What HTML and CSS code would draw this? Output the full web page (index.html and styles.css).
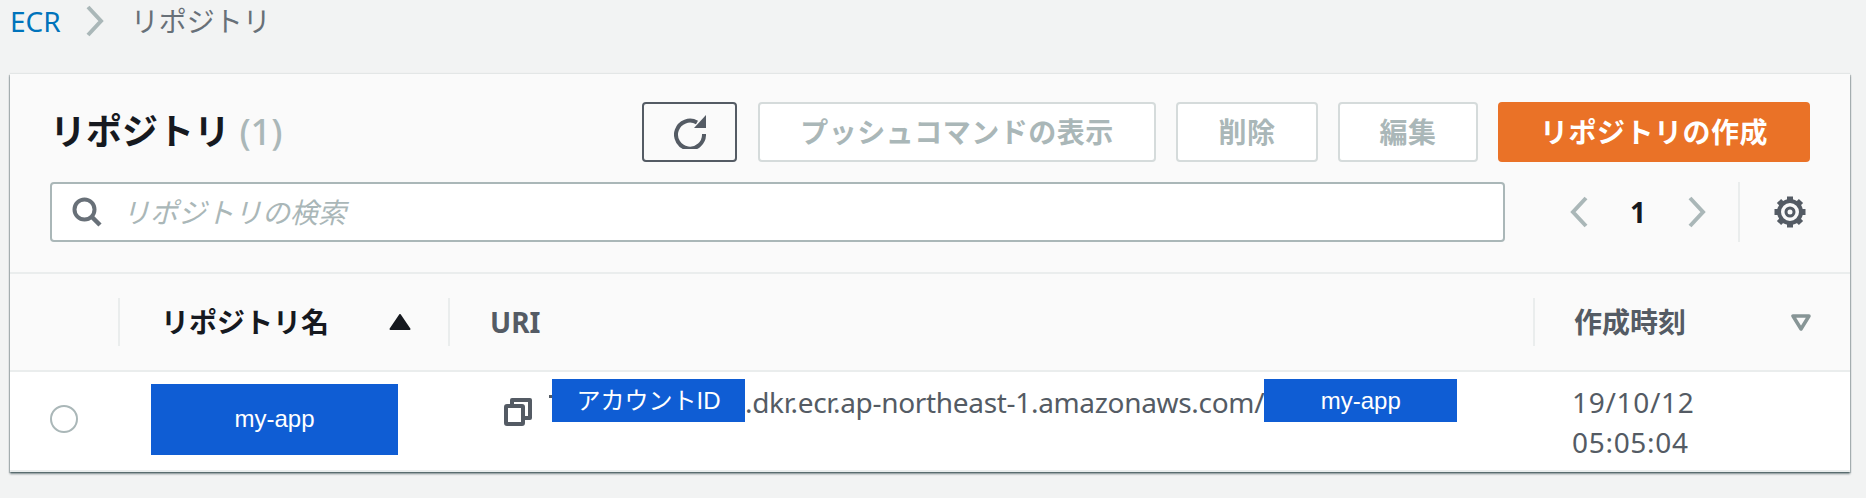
FILE: index.html
```html
<!DOCTYPE html>
<html lang="ja">
<head>
<meta charset="utf-8">
<title>リポジトリ</title>
<link rel="stylesheet" href="styles.css">
</head>
<body>
<nav class="crumbs">
  <a class="crumb-link">ECR</a>
  <svg class="crumb-sep" width="20" height="32" viewBox="0 0 20 32"><path d="M3 2l13 14L3 30" fill="none" stroke="#aab7b8" stroke-width="4"/></svg>
  <span class="crumb-current">リポジトリ</span>
</nav>
<main class="card">
  <header class="card-head">
    <div class="toolbar">
      <h1 class="title">リポジトリ <span class="count">(1)</span></h1>
      <div class="actions">
        <button class="btn btn-icon">
          <svg width="32" height="34" viewBox="0 0 32 34"><path d="M23 7.500A14 14 0 1 0 30 19" fill="none" stroke="#545b64" stroke-width="4"/><path d="M20 13h12V0z" fill="#545b64"/></svg>
        </button>
        <button class="btn btn-off btn-push">プッシュコマンドの表示</button>
        <button class="btn btn-off btn-small">削除</button>
        <button class="btn btn-off btn-edit">編集</button>
        <button class="btn btn-primary">リポジトリの作成</button>
      </div>
    </div>
    <div class="filter-row">
      <div class="search">
        <svg class="search-icon" width="30" height="30" viewBox="0 0 30 30"><circle cx="12.5" cy="12.5" r="10" fill="none" stroke="#687078" stroke-width="4"/><path d="M19.5 19.5l8.500 8.500" stroke="#687078" stroke-width="4.500"/></svg>
        <span class="placeholder">リポジトリの検索</span>
      </div>
      <div class="pager">
        <svg width="20" height="32" viewBox="0 0 20 32"><path d="M17 2L4 16l13 14" fill="none" stroke="#aab7b8" stroke-width="4"/></svg>
        <span class="page-num">1</span>
        <svg width="20" height="32" viewBox="0 0 20 32"><path d="M3 2l13 14L3 30" fill="none" stroke="#aab7b8" stroke-width="4"/></svg>
      </div>
      <div class="settings">
        <svg width="34" height="34" viewBox="0 0 34 34" fill="none" stroke="#545b64">
          <circle cx="17" cy="17" r="11" stroke-width="4"/>
          <circle cx="17" cy="17" r="4" stroke-width="3"/>
          <g stroke-width="6">
            <path d="M17 1.500v4M17 28.500v4M1.500 17h4M28.500 17h4"/>
            <path d="M6 6l3 3M25 25l3 3M6 28l3-3M25 9l3-3"/>
          </g>
        </svg>
      </div>
    </div>
  </header>
  <div class="table-row table-head">
    <div class="th"></div>
    <div class="th th-sep th-name">
      <span>リポジトリ名</span>
      <svg width="22" height="16" viewBox="0 0 22 16"><path d="M11 1l9.500 14H1.500z" fill="#16191f" stroke="#16191f" stroke-width="2" stroke-linejoin="round"/></svg>
    </div>
    <div class="th th-sep th-uri">URI</div>
    <div class="th th-sep th-date">
      <span>作成時刻</span>
      <svg width="20" height="17" viewBox="0 0 20 17"><path d="M2 2h16L10 15z" fill="none" stroke="#879596" stroke-width="3.500" stroke-linejoin="round"/></svg>
    </div>
  </div>
  <div class="table-row table-body">
    <div class="td td-select"><span class="radio"></span></div>
    <div class="td td-name"><span class="mask mask-name">my-app</span></div>
    <div class="td td-uri">
      <svg class="copy" width="28" height="28" viewBox="0 0 28 28" fill="none" stroke="#545b64" stroke-width="4" stroke-linejoin="round"><path d="M8 6V2h18v18h-5"/><rect x="2" y="8" width="17" height="18" rx="1"/></svg>
      <span class="mask mask-uri mask-account">アカウントID</span>
      <span class="uri">.dkr.ecr.ap-northeast-1.amazonaws.com/</span>
      <span class="mask mask-uri">my-app</span>
    </div>
    <div class="td td-date">19/10/12<br>05:05:04</div>
  </div>
</main>
</body>
</html>
```
FILE: styles.css
```css
* { box-sizing: border-box; }
html, body { margin: 0; height: 100%; }
body {
  padding: 0 16px 0 10px;
  background: #f2f3f3;
  color: #545b64;
  font-family: "Noto Sans", "Noto Sans CJK JP", sans-serif;
  font-size: 28px;
  line-height: 40px;
  overflow: hidden;
}
.crumbs {
  display: flex;
  align-items: center;
  height: 74px;
  padding-bottom: 32px;
}
.crumb-link { color: #0073bb; }
.crumb-sep { margin: 0 26px 0 24px; flex: none; }
.crumb-current { color: #687078; }

.card {
  background: #fff;
  height: 398px;
  box-shadow: 0 2px 2px rgba(0, 28, 36, .45), 1px 1px 1px rgba(0, 28, 36, .2), -1px 1px 1px rgba(0, 28, 36, .2), 0 -1px 1px rgba(0, 28, 36, .06);
}
.card-head {
  height: 200px;
  padding: 28px 40px 0;
  background: #fafafa;
  border-bottom: 2px solid #eaeded;
}
.toolbar { display: flex; align-items: center; justify-content: space-between; height: 60px; }
.title { margin: 0; color: #16191f; font-size: 36px; font-weight: 700; line-height: 60px; }
.count { color: #aab7b8; font-weight: 500; }
.actions { display: flex; gap: 20px; }
.btn {
  height: 60px;
  padding: 0;
  border-radius: 4px;
  font: 700 28px/1 "Noto Sans", "Noto Sans CJK JP", sans-serif;
  letter-spacing: .5px;
  background: #fff;
}
.btn-icon { width: 95px; margin-right: 1px; border: 2px solid #545b64; background: #fafafa; display: flex; align-items: center; justify-content: center; }
.btn-off { border: 2px solid #d5dbdb; color: #aab7b8; }
.btn-push { width: 398px; }
.btn-small { width: 142px; }
.btn-edit { width: 140px; }
.btn-primary { width: 312px; border: 0; background: #ea7227; color: #fff; }

.filter-row { display: flex; align-items: stretch; height: 60px; margin-top: 20px; }
.search {
  flex: none;
  width: 1455px;
  display: flex;
  align-items: center;
  gap: 20px;
  padding-left: 20px;
  background: #fff;
  border: 2px solid #aab7b8;
  border-radius: 4px;
}
.search-icon { flex: none; }
.placeholder { color: #aab7b8; font-style: italic; }
.pager {
  display: flex;
  align-items: center;
  margin-left: 64px;
  width: 171px;
  border-right: 2px solid #eaeded;
}
.page-num { width: 98px; color: #16191f; font-weight: 700; text-align: center; }
.settings { display: flex; align-items: center; padding-left: 33px; }

.table-row { display: grid; grid-template-columns: 108px 330px 1085px 1fr; }
.table-head {
  height: 98px;
  align-items: center;
  background: #fafafa;
  border-bottom: 2px solid #eaeded;
}
.th { height: 48px; display: flex; align-items: center; font-weight: 700; }
.th-sep { border-left: 2px solid #eaeded; }
.th-name { color: #16191f; padding-left: 41px; gap: 60px; }
.th-uri { padding-left: 40px; }
.th-date { padding-left: 39px; gap: 105px; }

.table-body {
  height: 100px;
  background: #fff;
  border-bottom: 2px solid #eaeded;
}
.td-select { display: flex; align-items: center; padding: 0 0 4px 40px; }
.radio { width: 28px; height: 28px; border: 2px solid #aab7b8; border-radius: 50%; background: #fff; }
.td-name { display: flex; align-items: center; padding: 0 0 4px 33px; }
.mask {
  background: #0f5dd4;
  color: #fff;
  font-family: "Liberation Sans", "Noto Sans CJK JP", sans-serif;
  font-size: 24px;
  font-weight: 400;
  display: flex;
  align-items: center;
  justify-content: center;
  flex: none;
}
.mask-name { width: 247px; height: 71px; }
.td-uri { display: flex; align-items: flex-start; padding: 10px 0 0 56px; white-space: nowrap; }
.copy { flex: none; margin: 16px 20px 0 0; }
.mask-uri { width: 193px; height: 43px; margin-top: -3px; }
.mask-account { position: relative; }
.mask-account::before {
  content: "";
  position: absolute;
  left: -3px;
  top: 16px;
  width: 3px;
  height: 3px;
  background: #545b64;
}
.uri { letter-spacing: -.32px; }
.td-date { padding: 10px 0 0 39px; letter-spacing: .7px; }
```
